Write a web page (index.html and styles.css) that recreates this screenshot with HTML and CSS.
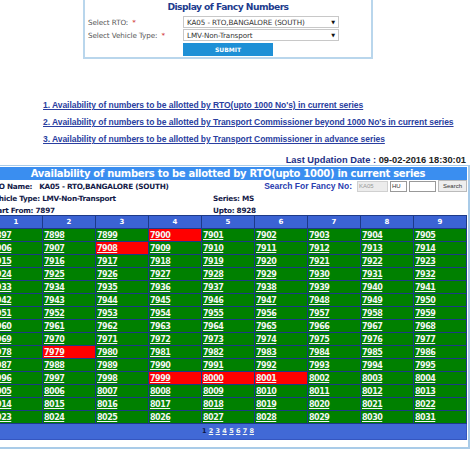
FILE: index.html
```html
<!DOCTYPE html>
<html>
<head>
<meta charset="utf-8">
<link rel="stylesheet" href="styles.css">
</head>
<body>
<div class="page">
  <div class="form-box">
    <div class="form-title">Display of Fancy Numbers</div>
    <div class="form-grid">
      <div class="form-label">Select RTO: <span class="req">*</span></div>
      <div class="select"><span>KA05 - RTO,BANGALORE (SOUTH)</span><span class="arrow">▼</span></div>
      <div class="form-label">Select Vehicle Type: <span class="req">*</span></div>
      <div class="select"><span>LMV-Non-Transport</span><span class="arrow">▼</span></div>
      <div></div>
      <div><button class="submit">SUBMIT</button></div>
    </div>
  </div>

  <div class="links">
    <a href="#">1. Availability of numbers to be allotted by RTO(upto 1000 No's) in current series</a>
    <a href="#">2. Availability of numbers to be allotted by Transport Commissioner beyond 1000 No's in current series</a>
    <a href="#">3. Availability of numbers to be allotted by Transport Commissioner in advance series</a>
  </div>

  <div class="updated"><span class="upd-label">Last Updation Date :</span> 09-02-2016 18:30:01</div>

  <div class="panel">
    <div class="panel-title">Availability of numbers to be allotted by RTO(upto 1000) in current series</div>
    <div class="info">
      <div class="info-row">
        <div class="info-left">RTO Name:&nbsp;&nbsp; KA05 - RTO,BANGALORE (SOUTH)</div>
        <div class="search">
          <span class="search-label">Search For Fancy No:</span>
          <input class="inp inp-dis" value="KA05" disabled>
          <input class="inp inp-hu" value="HU">
          <input class="inp inp-num" value="">
          <button class="search-btn">Search</button>
        </div>
      </div>
      <div class="info-row">
        <div class="info-left">Vehicle Type: LMV-Non-Transport</div>
        <div class="info-mid">Series: MS</div>
      </div>
      <div class="info-row">
        <div class="info-left">Start From: 7897</div>
        <div class="info-mid">Upto: 8928</div>
      </div>
    </div>
    <table class="grid" id="grid">
      <thead>
        <tr><th>1</th><th>2</th><th>3</th><th>4</th><th>5</th><th>6</th><th>7</th><th>8</th><th>9</th></tr>
      </thead>
      <tbody id="gbody"></tbody>
      <tfoot>
        <tr><td colspan="9" class="pager"><span class="cur">1</span> <a href="#">2</a> <a href="#">3</a> <a href="#">4</a> <a href="#">5</a> <a href="#">6</a> <a href="#">7</a> <a href="#">8</a></td></tr>
      </tfoot>
    </table>
  </div>
</div>
<script>
  (function () {
    var red = {7900: 1, 7908: 1, 7979: 1, 7999: 1, 8000: 1, 8001: 1};
    var body = document.getElementById('gbody');
    var html = '';
    for (var r = 0; r < 15; r++) {
      html += '<tr>';
      for (var c = 0; c < 9; c++) {
        var n = 7897 + r * 9 + c;
        html += '<td class="' + (red[n] ? 'taken' : 'free') + '"><a href="#">' + n + '</a></td>';
      }
      html += '</tr>';
    }
    body.innerHTML = html;
  })();
</script>
</body>
</html>
```

FILE: styles.css
```css
html, body {
  margin: 0;
  padding: 0;
  background: #ffffff;
}
body {
  font-family: "DejaVu Sans", Verdana, sans-serif;
  overflow: hidden;
}
.page {
  width: 484px;
  margin-left: -14px;
}

/* top form */
.form-box {
  width: 290px;
  margin: -6px auto 0;
  border: 2px solid #b9d6ec;
  border-top: none;
  box-sizing: border-box;
  padding: 7px 0 1px 0;
  background: #fff;
}
.form-title {
  text-align: center;
  font-weight: bold;
  font-size: 9.2px;
  letter-spacing: -0.55px;
  color: #1d3c8e;
  line-height: 12px;
  margin-bottom: 3px;
}
.form-grid {
  display: grid;
  grid-template-columns: 95px 156px;
  row-gap: 1px;
  align-items: center;
  padding-left: 3px;
}
.form-label {
  font-size: 7.2px;
  color: #555;
  letter-spacing: -0.1px;
  white-space: nowrap;
}
.req { color: #d03030; margin-left: 2px; }
.select {
  height: 12px;
  box-sizing: border-box;
  border: 1px solid #c8c8c8;
  display: flex;
  justify-content: space-between;
  align-items: center;
  font-size: 7.2px;
  color: #333;
  padding: 0 3px;
  letter-spacing: -0.1px;
}
.arrow { font-size: 5px; color: #111; }
.submit {
  display: block;
  margin-top: 1px;
  width: 90px;
  height: 13px;
  border: none;
  background: #1e90d6;
  color: #fff;
  font-family: "DejaVu Sans", sans-serif;
  font-weight: bold;
  font-size: 6px;
  padding: 0;
}

/* links */
.links {
  display: flex;
  flex-direction: column;
  padding: 38px 0 0 57px;
}
.links a {
  display: block;
  font-family: "Liberation Sans", Arial, sans-serif;
  font-weight: bold;
  font-size: 8.5px;
  letter-spacing: -0.05px;
  color: #2a3ea0;
  line-height: 17px;
  height: 17px;
  text-decoration: underline;
  white-space: nowrap;
}

/* updated */
.updated {
  text-align: right;
  padding-right: 4px;
  margin-top: 6px;
  font-family: "Liberation Sans", Arial, sans-serif;
  font-size: 9.3px;
  font-weight: bold;
  color: #222;
  line-height: 12px;
  height: 11px;
}
.upd-label { color: #1c2f86; }

/* panel */
.panel {
  border: 2px solid #a9cbe8;
  border-top: 1px solid #a9cbe8;
  padding: 1px 1px 7px 1px;
  width: 484px;
  box-sizing: border-box;
}
.panel-title {
  background: #3a8ef0;
  color: #fff;
  font-weight: bold;
  font-size: 10px;
  letter-spacing: -0.3px;
  text-align: center;
  line-height: 13px;
  white-space: nowrap;
}
.info {
  color: #141a48;
  font-weight: bold;
  font-size: 7.3px;
  letter-spacing: -0.25px;
}
.info-row {
  display: grid;
  grid-template-columns: 224px 1fr;
  align-items: center;
  height: 12px;
  white-space: nowrap;
}
.search {
  display: flex;
  align-items: center;
  justify-self: end;
  column-gap: 2px;
}
.search-label {
  font-family: "Liberation Sans", Arial, sans-serif;
  color: #2a40b0;
  font-size: 8.5px;
  letter-spacing: 0;
  margin-right: 3px;
}
.inp {
  height: 11px;
  box-sizing: border-box;
  border: 1px solid #999;
  font-family: "Liberation Sans", Arial, sans-serif;
  font-size: 6px;
  padding: 0 1px;
  margin: 0;
  letter-spacing: 0;
}
.inp-dis { width: 31px; background: #ececec; color: #999; border-color: #d0d0d0; }
.inp-hu { width: 17px; color: #333; }
.inp-num { width: 27px; }
.search-btn {
  height: 12px;
  width: 29px;
  border: 1px solid #bbb;
  background: #eee;
  font-family: "Liberation Sans", Arial, sans-serif;
  font-size: 6px;
  letter-spacing: 0;
  color: #333;
  padding: 0;
}

/* grid */
.grid {
  border-collapse: collapse;
  width: 478px;
  table-layout: fixed;
  margin-top: -1px;
}
.grid th {
  background: #3b63d3;
  color: #fff;
  font-size: 7px;
  font-weight: bold;
  height: 12px;
  line-height: 11px;
  padding: 0;
  border: 1px solid #1d3a88;
}
.grid td {
  height: 12px;
  line-height: 11px;
  padding: 0 0 0 1px;
  border: 1px solid #1d3a88;
  font-size: 8px;
  font-weight: bold;
  letter-spacing: -0.5px;
}
.grid td.free { background: #008000; }
.grid td.taken { background: #ff0000; }
.grid td a { color: #f2f6f2; }
.grid td.pager {
  background: #4169d6;
  height: 15px;
  padding: 0;
  text-align: center;
  font-size: 6.5px;
  letter-spacing: 0;
  color: #111c55;
  border: 1px solid #3556c0;
}
.pager a { color: #1c2c78; }
.pager .cur { color: #0d1440; }
```
